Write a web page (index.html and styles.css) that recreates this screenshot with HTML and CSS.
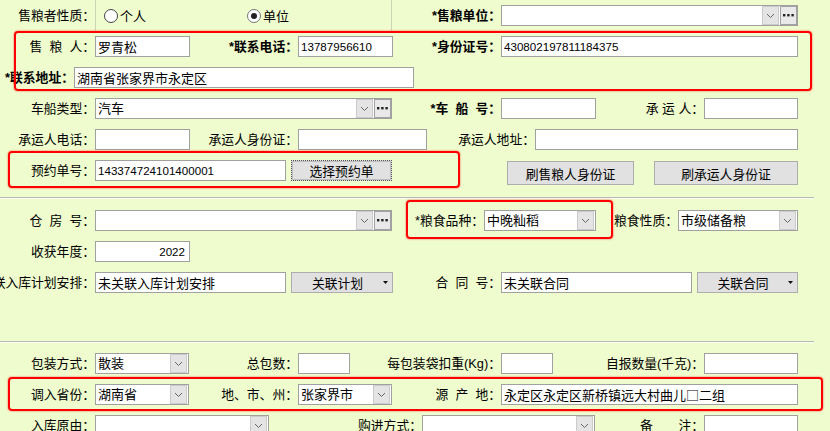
FILE: index.html
```html
<!DOCTYPE html>
<html>
<head>
	<title>粮食入库登记</title>
	<link rel="stylesheet" href="styles.css">
</head>
<body>
	<div class="form">
		<div class="section">
			<div class="row">
				<div class="lbl w95">售粮者性质：</div>
				<div class="radios w297">
					<span class="opt first"><span class="radio"></span>个人</span>
					<span class="opt"><span class="radio checked"></span>单位</span>
				</div>
				<div class="lbl req w109">*售粮单位：</div>
				<div class="combo w297">
					<span class="val"></span>
					<span class="drop"><svg width="9" height="6"><polyline points="1,1 4.5,4.5 8,1"/></svg></span>
					<span class="more"><svg width="11" height="3"><rect x="0" y="0" width="2.4" height="2.4"/><rect x="4.2" y="0" width="2.4" height="2.4"/><rect x="8.4" y="0" width="2.4" height="2.4"/></svg></span>
				</div>
			</div>
			<div class="row">
				<div class="lbl w95">售&nbsp;&nbsp;粮&nbsp;&nbsp;人：</div>
				<input class="txt w95" value="罗青松">
				<div class="lbl req w108">*联系电话：</div>
				<input class="txt num w95" value="13787956610">
				<div class="lbl req w108">*身份证号：</div>
				<input class="txt num w297" value="430802197811184375">
			</div>
			<div class="row">
				<div class="lbl req w74">*联系地址：</div>
				<input class="txt w340" value="湖南省张家界市永定区">
			</div>
			<div class="row">
				<div class="lbl w95">车船类型：</div>
				<div class="combo w297">
					<span class="val">汽车</span>
					<span class="drop"><svg width="9" height="6"><polyline points="1,1 4.5,4.5 8,1"/></svg></span>
					<span class="more"><svg width="11" height="3"><rect x="0" y="0" width="2.4" height="2.4"/><rect x="4.2" y="0" width="2.4" height="2.4"/><rect x="8.4" y="0" width="2.4" height="2.4"/></svg></span>
				</div>
				<div class="lbl req w109">*车&nbsp;&nbsp;船&nbsp;&nbsp;号：</div>
				<input class="txt w95" value="">
				<div class="lbl w108">承&nbsp;运&nbsp;人：</div>
				<input class="txt w94" value="">
			</div>
			<div class="row">
				<div class="lbl w95">承运人电话：</div>
				<input class="txt w95" value="">
				<div class="lbl w108">承运人身份证：</div>
				<input class="txt w129" value="">
				<div class="lbl w108">承运人地址：</div>
				<input class="txt w263" value="">
			</div>
			<div class="row">
				<div class="lbl w95">预约单号：</div>
				<input class="txt num w191" value="143374724101400001">
				<button class="btn focus w101 ml5">选择预约单</button>
				<button class="btn tall w127 ml115">刷售粮人身份证</button>
				<button class="btn tall w144 ml20">刷承运人身份证</button>
			</div>
		</div>

		<div class="divider first-divider"></div>

		<div class="section">
			<div class="row">
				<div class="lbl w95">仓&nbsp;&nbsp;房&nbsp;&nbsp;号：</div>
				<div class="combo w297">
					<span class="val"></span>
					<span class="drop"><svg width="9" height="6"><polyline points="1,1 4.5,4.5 8,1"/></svg></span>
					<span class="more"><svg width="11" height="3"><rect x="0" y="0" width="2.4" height="2.4"/><rect x="4.2" y="0" width="2.4" height="2.4"/><rect x="8.4" y="0" width="2.4" height="2.4"/></svg></span>
				</div>
				<div class="lbl w92">*粮食品种：</div>
				<div class="combo single w112">
					<span class="val">中晚籼稻</span>
					<span class="drop"><svg width="9" height="6"><polyline points="1,1 4.5,4.5 8,1"/></svg></span>
				</div>
				<div class="lbl w82">粮食性质：</div>
				<div class="combo single w120">
					<span class="val">市级储备粮</span>
					<span class="drop"><svg width="9" height="6"><polyline points="1,1 4.5,4.5 8,1"/></svg></span>
				</div>
			</div>
			<div class="row">
				<div class="lbl w95">收获年度：</div>
				<input class="txt num right w95" value="2022">
			</div>
			<div class="row">
				<div class="lbl w95">关联入库计划安排：</div>
				<input class="txt w191" value="未关联入库计划安排">
				<button class="btn menu w102 ml5"><span class="cap">关联计划</span><svg class="caret" width="5" height="3"><polygon points="0,0 5,0 2.5,3"/></svg></button>
				<div class="lbl w108">合&nbsp;&nbsp;同&nbsp;&nbsp;号：</div>
				<input class="txt w191" value="未关联合同">
				<button class="btn menu w101 ml5"><span class="cap">关联合同</span><svg class="caret" width="5" height="3"><polygon points="0,0 5,0 2.5,3"/></svg></button>
			</div>
		</div>

		<div class="divider second-divider"></div>

		<div class="section">
			<div class="row">
				<div class="lbl w95">包装方式：</div>
				<div class="combo single w94">
					<span class="val">散装</span>
					<span class="drop"><svg width="9" height="6"><polyline points="1,1 4.5,4.5 8,1"/></svg></span>
				</div>
				<div class="lbl w109">总包数：</div>
				<input class="txt w52" value="">
				<div class="lbl w151">每包装袋扣重(Kg)：</div>
				<input class="txt w52" value="">
				<div class="lbl w151">自报数量(千克)：</div>
				<input class="txt w94" value="">
			</div>
			<div class="row">
				<div class="lbl w95">调入省份：</div>
				<div class="combo single w94">
					<span class="val">湖南省</span>
					<span class="drop"><svg width="9" height="6"><polyline points="1,1 4.5,4.5 8,1"/></svg></span>
				</div>
				<div class="lbl w109">地、市、州：</div>
				<div class="combo single w94">
					<span class="val">张家界市</span>
					<span class="drop"><svg width="9" height="6"><polyline points="1,1 4.5,4.5 8,1"/></svg></span>
				</div>
				<div class="lbl w109">源&nbsp;&nbsp;产&nbsp;&nbsp;地：</div>
				<input class="txt cjk w297" value="永定区永定区新桥镇远大村曲儿□二组">
			</div>
			<div class="row">
				<div class="lbl w95">入库原由：</div>
				<div class="combo single w174">
					<span class="val"></span>
					<span class="drop"><svg width="9" height="6"><polyline points="1,1 4.5,4.5 8,1"/></svg></span>
				</div>
				<div class="lbl w153">购进方式：</div>
				<div class="combo single w173">
					<span class="val"></span>
					<span class="drop"><svg width="9" height="6"><polyline points="1,1 4.5,4.5 8,1"/></svg></span>
				</div>
				<div class="lbl w109">备&emsp;&emsp;注：</div>
				<input class="txt w94" value="">
			</div>
		</div>

		<div class="mark m1"></div>
		<div class="mark m2"></div>
		<div class="mark m3"></div>
		<div class="mark m4"></div>
	</div>
</body>
</html>
```

FILE: styles.css
```css
html, body {
	margin: 0;
	padding: 0;
	height: 431px;
	overflow: hidden;
}
body {
	background-color: #effccd;
	font-family: "Liberation Sans", "Noto Sans CJK SC", sans-serif;
	font-size: 12.8px;
	color: #000;
}
.form {
	position: relative;
	width: 830px;
}
.row {
	display: flex;
	align-items: center;
	height: 31px;
}
.row > * {
	flex-shrink: 0;
}
.lbl {
	display: flex;
	justify-content: flex-end;
	white-space: nowrap;
	line-height: 16px;
}
.req {
	font-weight: bold;
}

/* text boxes */
.txt {
	box-sizing: border-box;
	height: 21px;
	margin: 0;
	padding: 0 2px;
	border: 1px solid #a0a0a0;
	background-color: #fff;
	font-family: "Liberation Sans", "Noto Sans CJK SC", sans-serif;
	font-size: 13px;
	color: #000;
	outline: none;
}
.cjk {
	font-family: "Noto Sans CJK SC", sans-serif;
}
.num {
	font-size: 11.6px;
}
.right {
	text-align: right;
	padding-right: 4px;
}

/* combo boxes */
.combo {
	display: flex;
	box-sizing: border-box;
	height: 21px;
	border: 1px solid #a0a0a0;
	background-color: #fff;
}
.combo .val {
	flex: 1;
	padding: 0 2px;
	font-size: 13px;
	line-height: 19px;
	white-space: nowrap;
	overflow: hidden;
}
.drop, .more {
	display: flex;
	align-items: center;
	justify-content: center;
	box-sizing: border-box;
	width: 17px;
	height: 19px;
}
.drop {
	background-color: #e4e4e4;
	border: 1px solid #cbcbcb;
}
.single .drop {
	margin-right: 1px;
}
.drop polyline {
	fill: none;
	stroke: #666;
	stroke-width: 1;
}
.more {
	margin-left: 1px;
	background-color: #e9e9e9;
	border: 1px solid #a2a2a2;
}
.more rect {
	fill: #222;
}

/* radio group */
.radios {
	display: flex;
	align-items: center;
	box-sizing: border-box;
	height: 31px;
	padding-left: 8px;
	border-left: 1px solid #cdd5b6;
	border-right: 1px solid #cdd5b6;
	font-size: 13px;
}
.opt {
	display: flex;
	align-items: center;
	gap: 2px;
}
.opt.first {
	width: 143px;
}
.radio {
	position: relative;
	box-sizing: border-box;
	width: 14px;
	height: 14px;
	border: 1px solid #444;
	border-radius: 50%;
	background-color: #fff;
}
.radio.checked {
	border-color: #777;
}
.radio.checked::after {
	content: "";
	position: absolute;
	left: 3px;
	top: 3px;
	width: 6px;
	height: 6px;
	border-radius: 50%;
	background-color: #222;
}

/* buttons */
.btn {
	box-sizing: border-box;
	height: 21px;
	margin: 0;
	padding: 0;
	background-color: #e1e1e1;
	border: 1px solid #adadad;
	font-family: "Liberation Sans", "Noto Sans CJK SC", sans-serif;
	font-size: 12.8px;
	color: #000;
}
.focus {
	border: 1px dotted #555;
	box-shadow: inset 0 0 0 1px #bdbdbd;
}
.tall {
	height: 24px;
	margin-top: 5px;
}
.menu {
	display: flex;
	align-items: center;
}
.menu .cap {
	flex: 1;
	text-align: center;
}
.caret {
	margin-right: 4px;
	fill: #111;
}

.divider {
	width: 814px;
	height: 0;
	border-top: 1px solid #b8b8b8;
	border-bottom: 1px solid #fbfff0;
}
.first-divider {
	margin: 11px 0 6px;
}
.second-divider {
	margin: 43px 0 5px;
}

/* red highlight frames */
.mark {
	position: absolute;
	box-sizing: border-box;
	border: 2px solid #f00;
	border-radius: 4px;
	box-shadow: 0 0 2px rgba(255, 0, 0, 0.7);
}
.m1 { left: 14px; top: 31px; width: 798px; height: 60px; }
.m2 { left: 8px; top: 151px; width: 452px; height: 37px; }
.m3 { left: 406px; top: 200px; width: 207px; height: 39px; }
.m4 { left: 8px; top: 377px; width: 815px; height: 34px; }

.ml5 { margin-left: 5px; }
.ml20 { margin-left: 20px; }
.ml115 { margin-left: 115px; }

.w52 { width: 52px; }
.w74 { width: 74px; }
.w82 { width: 82px; }
.w92 { width: 92px; }
.w94 { width: 94px; }
.w95 { width: 95px; }
.w101 { width: 101px; }
.w102 { width: 102px; }
.w108 { width: 108px; }
.w109 { width: 109px; }
.w112 { width: 112px; }
.w120 { width: 120px; }
.w127 { width: 127px; }
.w129 { width: 129px; }
.w144 { width: 144px; }
.w151 { width: 151px; }
.w153 { width: 153px; }
.w173 { width: 173px; }
.w174 { width: 174px; }
.w191 { width: 191px; }
.w263 { width: 263px; }
.w297 { width: 297px; }
.w340 { width: 340px; }
```
